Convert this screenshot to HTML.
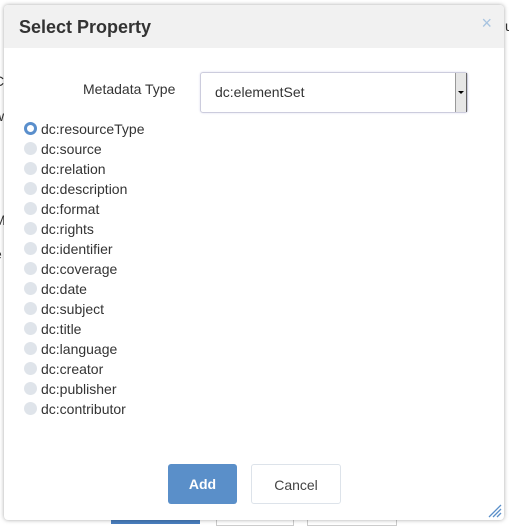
<!DOCTYPE html>
<html><head><style>
body{margin:0;width:509px;height:524px;background:#fff;position:relative;overflow:hidden;font-family:"Liberation Sans",sans-serif;color:#333}
.bgt{position:absolute;font-size:14px;color:#333}
.dlg{position:absolute;left:4px;top:5px;width:500px;height:515px;background:#fff;border-radius:4px;box-shadow:0 0 4px rgba(0,0,0,.35);overflow:hidden}
.hdr{height:43px;background:#f1f1f1;position:relative}
.hdr h1{margin:0;position:absolute;left:15px;top:12px;font-size:18px;font-weight:bold;color:#333}
.x{position:absolute;right:12px;top:8px;color:#a8c4e0;font-size:18px}
.lbl{position:absolute;left:79px;top:76px;font-size:14px}
.sel{position:absolute;left:196px;top:67px;width:268px;height:41px;border:1px solid #ccd;border-radius:3px;box-sizing:border-box;font-size:14px;line-height:39px;padding-left:14px;box-shadow:0 0 2px #dde}
.arr{position:absolute;right:0;top:0;width:10px;height:39px;background:#e6e6e6;border-left:1px solid #999;border-right:1px solid #666}
.arr:after{content:"";position:absolute;left:2px;top:18px;border:3px solid transparent;border-top:3px solid #000}
.r{position:absolute;left:20px;font-size:14px;height:20px;line-height:20px}
.r i{position:absolute;left:0;top:3px;width:13px;height:13px;border-radius:50%;background:#dfe4ea}
.r i.on{background:#fff;box-sizing:border-box;border:3px solid #5a8fcc}
.r span{position:absolute;left:17px;white-space:nowrap}
.btn{position:absolute;top:459px;height:40px;border-radius:3px;box-sizing:border-box;font-size:14px;text-align:center;line-height:40px}
</style></head><body>
<div class="bgt" style="left:-6px;top:73px">C</div>
<div class="bgt" style="left:-6px;top:108px">w</div>
<div class="bgt" style="left:-6px;top:212px">M</div>
<div class="bgt" style="left:-6px;top:246px">e</div>
<div class="bgt" style="left:505px;top:18px">u</div>
<div style="position:absolute;left:111px;top:519px;width:89px;height:5px;background:#4a7fbf"></div>
<div style="position:absolute;left:216px;top:519px;width:76px;height:5px;border:1px solid #ccc"></div>
<div style="position:absolute;left:307px;top:519px;width:88px;height:5px;border:1px solid #ccc"></div>
<div class="dlg">
<div class="hdr"><h1>Select Property</h1><div class="x">×</div></div>
<div class="lbl">Metadata Type</div>
<div class="sel">dc:elementSet<div class="arr"></div></div>
<div class="r" style="top:114px"><i class="on"></i><span>dc:resourceType</span></div>
<div class="r" style="top:134px"><i></i><span>dc:source</span></div>
<div class="r" style="top:154px"><i></i><span>dc:relation</span></div>
<div class="r" style="top:174px"><i></i><span>dc:description</span></div>
<div class="r" style="top:194px"><i></i><span>dc:format</span></div>
<div class="r" style="top:214px"><i></i><span>dc:rights</span></div>
<div class="r" style="top:234px"><i></i><span>dc:identifier</span></div>
<div class="r" style="top:254px"><i></i><span>dc:coverage</span></div>
<div class="r" style="top:274px"><i></i><span>dc:date</span></div>
<div class="r" style="top:294px"><i></i><span>dc:subject</span></div>
<div class="r" style="top:314px"><i></i><span>dc:title</span></div>
<div class="r" style="top:334px"><i></i><span>dc:language</span></div>
<div class="r" style="top:354px"><i></i><span>dc:creator</span></div>
<div class="r" style="top:374px"><i></i><span>dc:publisher</span></div>
<div class="r" style="top:394px"><i></i><span>dc:contributor</span></div>
<div class="btn" style="left:164px;width:69px;background:#5a8fc9;color:#fff;font-weight:bold">Add</div>
<div class="btn" style="left:247px;width:90px;border:1px solid #dde3ea;color:#444">Cancel</div>
<svg style="position:absolute;right:2px;bottom:2px" width="14" height="14"><path d="M13 1L1 13M13 5L5 13M13 9L9 13" stroke="#5a8fc9" stroke-width="1.3"/></svg>
</div>
</body></html>
